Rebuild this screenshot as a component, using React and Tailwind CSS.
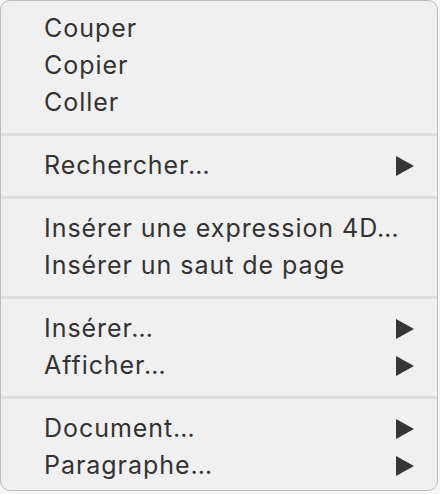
import React from "react";

const groups = [
  [
    { label: "Couper" },
    { label: "Copier" },
    { label: "Coller" },
  ],
  [{ label: "Rechercher…", sub: true }],
  [
    { label: "Insérer une expression 4D…" },
    { label: "Insérer un saut de page" },
  ],
  [
    { label: "Insérer…", sub: true },
    { label: "Afficher…", sub: true },
  ],
  [
    { label: "Document…", sub: true },
    { label: "Paragraphe…", sub: true },
  ],
];

const Arrow = () => (
  <svg width="18" height="20" viewBox="0 0 18 20" className="shrink-0">
    <polygon points="0,0 18,10 0,20" fill="#353535" />
  </svg>
);

const MenuItem = ({ label, sub }) => (
  <div className="flex h-[37px] items-center justify-between pl-[43px] pr-[23px]">
    <span className="whitespace-nowrap">{label}</span>
    {sub && <Arrow />}
  </div>
);

export default function App() {
  return (
    <div
      className="relative h-[494px] w-[440px] overflow-hidden bg-[#f6f6f6]"
      style={{ fontFamily: "Inter, 'Noto Sans', sans-serif" }}
    >
      <div className="w-[438px] rounded-[10px] border border-[#bcbcbc] bg-[#f0f0f0] pt-[9px] pb-[6px] text-[25px] tracking-[0.95px] text-[#333333]">
        {groups.map((group, i) => (
          <div key={i}>
            {i > 0 && (
              <div className="pt-[12px] pb-[11px]">
                <div className="h-[3px] bg-[#dedede]" />
              </div>
            )}
            {group.map((item) => (
              <MenuItem key={item.label} {...item} />
            ))}
          </div>
        ))}
      </div>
    </div>
  );
}
